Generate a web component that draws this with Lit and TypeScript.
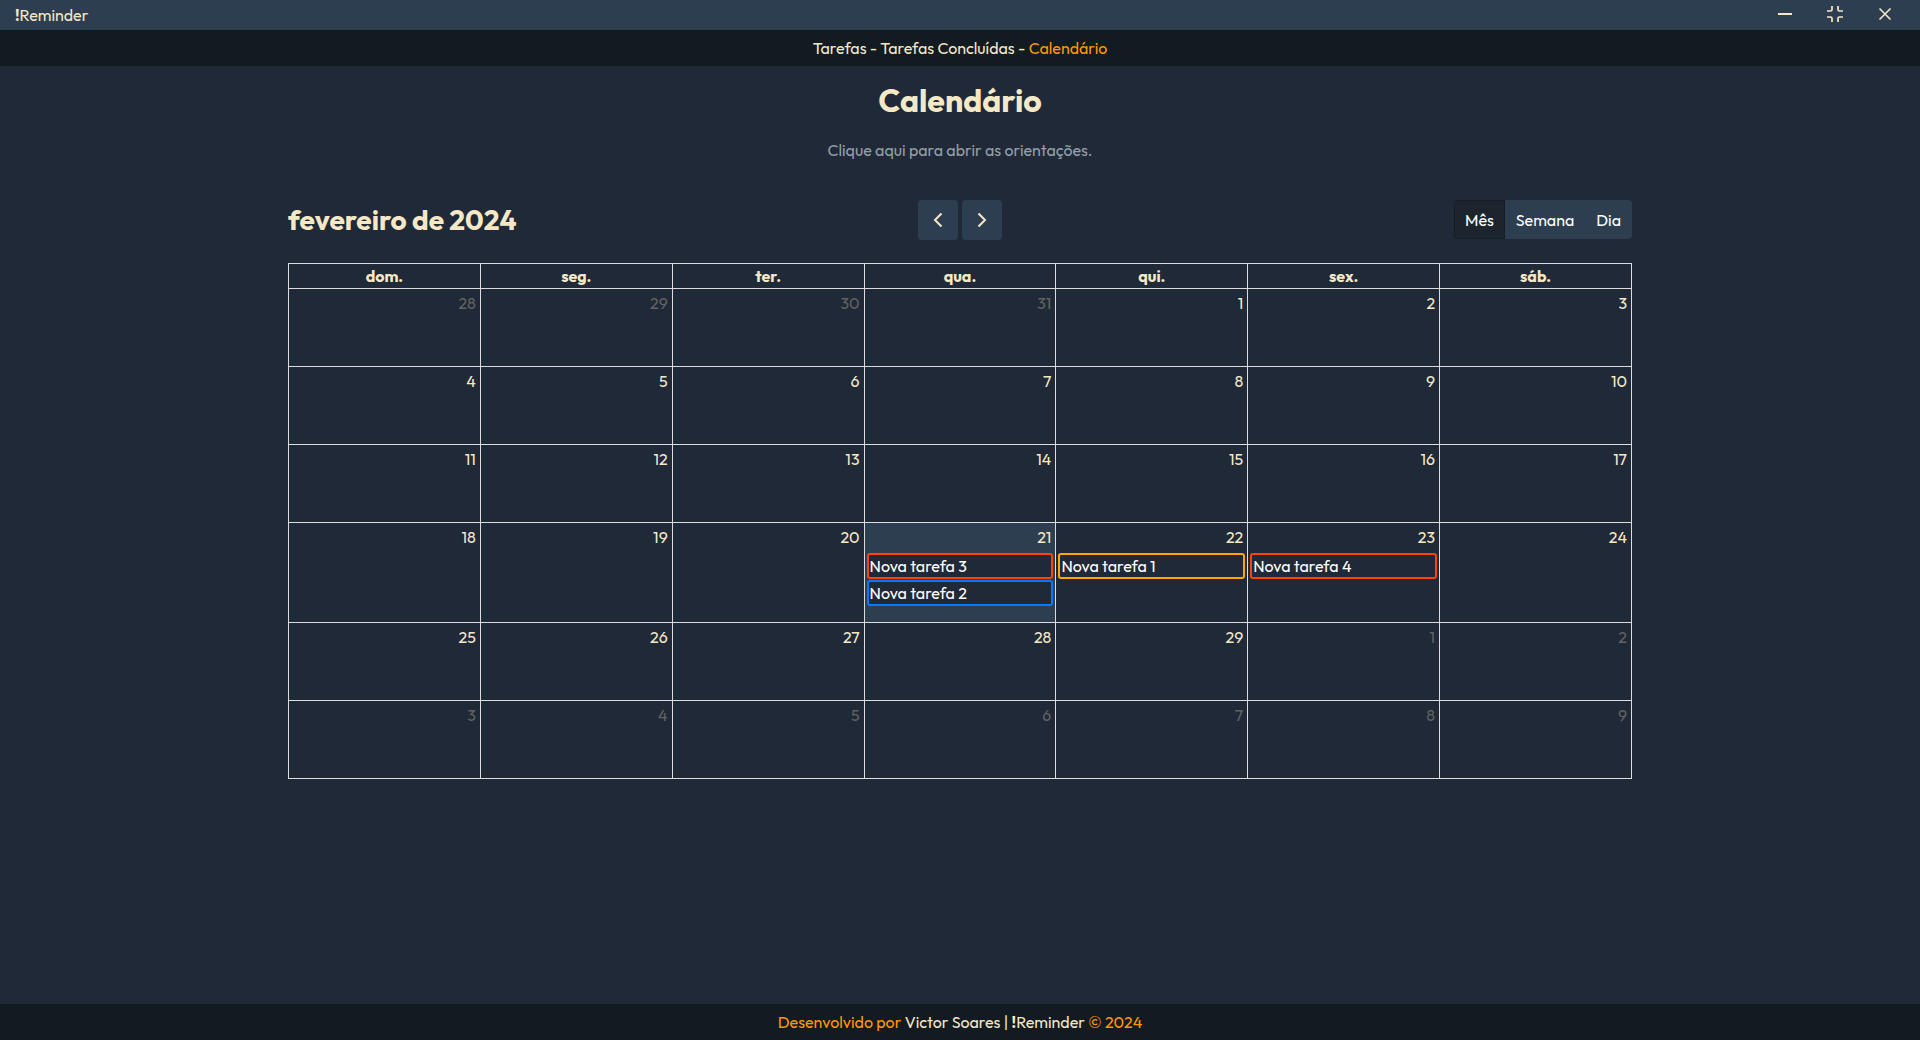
import { LitElement, html, css, svg } from "lit";
import { customElement, state } from "lit/decorators.js";
import { classMap } from "lit/directives/class-map.js";

type Level = "high" | "medium" | "low";

interface Task {
  title: string;
  level: Level;
}

interface Day {
  date: Date;
  other: boolean;
  today: boolean;
  tasks: Task[];
}

const WEEKDAYS = ["dom.", "seg.", "ter.", "qua.", "qui.", "sex.", "sáb."];
const VIEWS = ["Mês", "Semana", "Dia"];
const MONTHS = [
  "janeiro", "fevereiro", "março", "abril", "maio", "junho",
  "julho", "agosto", "setembro", "outubro", "novembro", "dezembro",
];
const TODAY = "2024-2-21";

const TASKS: Record<string, Task[]> = {
  "2024-2-21": [
    { title: "Nova tarefa 3", level: "high" },
    { title: "Nova tarefa 2", level: "low" },
  ],
  "2024-2-22": [{ title: "Nova tarefa 1", level: "medium" }],
  "2024-2-23": [{ title: "Nova tarefa 4", level: "high" }],
};

const keyOf = (d: Date) => `${d.getFullYear()}-${d.getMonth() + 1}-${d.getDate()}`;

function monthWeeks(year: number, month: number): Day[][] {
  const offset = new Date(year, month, 1).getDay();
  return Array.from({ length: 6 }, (_, w) =>
    Array.from({ length: 7 }, (_, d) => {
      const date = new Date(year, month, 1 - offset + w * 7 + d);
      const key = keyOf(date);
      return {
        date,
        other: date.getMonth() !== month,
        today: key === TODAY,
        tasks: TASKS[key] ?? [],
      };
    })
  );
}

@customElement("title-bar")
export class TitleBar extends LitElement {
  static styles = css`
    :host {
      display: block;
    }
    .bar {
      display: flex;
      justify-content: space-between;
      align-items: center;
      height: 30px;
      padding-left: 15px;
      background: #2d3e50;
    }
    .controls {
      display: flex;
    }
    .control {
      display: flex;
      align-items: center;
      justify-content: center;
      width: 50px;
      height: 30px;
      padding: 0 0 2px;
      border: 0;
      background: none;
      color: #f5e8c7;
      cursor: pointer;
    }
    .control:last-child {
      margin-right: 10px;
    }
  `;

  render() {
    return html`
      <header class="bar">
        <span><b>!</b>Reminder</span>
        <div class="controls">
          <button class="control" aria-label="Minimizar">
            <svg width="16" height="16" viewBox="0 0 16 16" fill="none" stroke="currentColor" stroke-width="2">
              <path d="M1 8h14" />
            </svg>
          </button>
          <button class="control" aria-label="Restaurar">
            <svg width="18" height="18" viewBox="0 0 18 18" fill="none" stroke="currentColor" stroke-width="1.7">
              <path d="M6 1v3.500a1.500 1.500 0 0 1-1.500 1.500H1M12 1v3.500a1.500 1.500 0 0 0 1.500 1.500H17M1 12h3.500a1.500 1.500 0 0 1 1.500 1.500V17M17 12h-3.500a1.500 1.500 0 0 0-1.500 1.500V17" />
            </svg>
          </button>
          <button class="control" aria-label="Fechar">
            <svg width="14" height="14" viewBox="0 0 14 14" fill="none" stroke="currentColor" stroke-width="1.6">
              <path d="M1.500 1.500l11 11M12.500 1.500l-11 11" />
            </svg>
          </button>
        </div>
      </header>
    `;
  }
}

@customElement("month-calendar")
export class MonthCalendar extends LitElement {
  @state() private year = 2024;
  @state() private month = 1;
  @state() private view = "Mês";

  static styles = css`
    :host {
      display: block;
    }
    .toolbar {
      display: grid;
      grid-template-columns: 1fr auto 1fr;
      align-items: start;
      margin-bottom: 23px;
    }
    .month {
      margin: 0;
      font-size: 28px;
      line-height: 40px;
      font-weight: 700;
    }
    .arrows {
      display: flex;
      gap: 4px;
    }
    .arrow {
      display: flex;
      align-items: center;
      justify-content: center;
      width: 40px;
      height: 40px;
      padding: 0;
      border: 0;
      border-radius: 4px;
      background: #2d3e50;
      color: #f5e8c7;
      cursor: pointer;
    }
    .views {
      display: flex;
      justify-self: end;
      border-radius: 4px;
      overflow: hidden;
    }
    .view {
      height: 39px;
      padding: 0 11px;
      border: 0;
      background: #2d3e50;
      color: #fff;
      font: inherit;
      cursor: pointer;
    }
    .view.active {
      background: #1c252e;
      box-shadow: inset 0 0 0 1px #151e27;
    }
    .grid {
      width: 100%;
      table-layout: fixed;
      border-collapse: collapse;
    }
    .grid th,
    .grid td {
      border: 1px solid #ddd;
    }
    .grid th {
      height: 24px;
      padding: 0;
      line-height: 24px;
      font-weight: 700;
    }
    .grid td {
      height: 77px;
      padding: 0;
      vertical-align: top;
    }
    .today {
      background: #2d3e50;
    }
    .number {
      display: block;
      padding: 4px 4px 6px;
      line-height: 20px;
      text-align: right;
      color: inherit;
      text-decoration: none;
    }
    .other .number {
      color: #616261;
    }
    .tasks {
      display: grid;
      gap: 1px;
      margin: 0 2px;
      padding: 0 0 16px;
      list-style: none;
    }
    .task {
      display: block;
      padding: 0 1px;
      border: 2px solid;
      border-radius: 3px;
      background: #202937;
      line-height: 22px;
      text-decoration: none;
    }
    .task span {
      color: #fff;
    }
    .high {
      border-color: #ff4500;
    }
    .medium {
      border-color: #ffa500;
    }
    .low {
      border-color: #007bff;
    }
  `;

  private move(step: number) {
    const next = new Date(this.year, this.month + step, 1);
    this.year = next.getFullYear();
    this.month = next.getMonth();
  }

  private arrow(label: string, step: number) {
    return html`
      <button class="arrow" aria-label=${label} @click=${() => this.move(step)}>
        <svg width="10" height="16" viewBox="0 0 10 16" fill="none" stroke="currentColor" stroke-width="2">
          ${step < 0 ? svg`<path d="M8.500 1.500L2 8l6.500 6.500" />` : svg`<path d="M1.500 1.500L8 8l-6.500 6.500" />`}
        </svg>
      </button>
    `;
  }

  private cell(day: Day) {
    return html`
      <td class=${classMap({ other: day.other, today: day.today })}>
        <a class="number" href="#${keyOf(day.date)}">${day.date.getDate()}</a>
        ${day.tasks.length
          ? html`<ul class="tasks">
              ${day.tasks.map(
                (t) => html`<li><a class="task ${t.level}" href="#tarefa"><span>${t.title}</span></a></li>`
              )}
            </ul>`
          : null}
      </td>
    `;
  }

  render() {
    return html`
      <div class="toolbar">
        <h2 class="month">${MONTHS[this.month]} de ${this.year}</h2>
        <div class="arrows">${this.arrow("Anterior", -1)}${this.arrow("Próximo", 1)}</div>
        <div class="views">
          ${VIEWS.map(
            (v) => html`<button
              class=${classMap({ view: true, active: v === this.view })}
              aria-pressed=${v === this.view}
              @click=${() => (this.view = v)}
            >${v}</button>`
          )}
        </div>
      </div>
      <table class="grid">
        <thead>
          <tr>${WEEKDAYS.map((d) => html`<th scope="col">${d}</th>`)}</tr>
        </thead>
        <tbody>
          ${monthWeeks(this.year, this.month).map(
            (week) => html`<tr>${week.map((day) => this.cell(day))}</tr>`
          )}
        </tbody>
      </table>
    `;
  }
}

@customElement("app-root")
export class AppRoot extends LitElement {
  static styles = css`
    :host {
      display: flex;
      flex-direction: column;
      min-height: 100vh;
      background: #202937;
      color: #f5e8c7;
      font: 16px/20px Outfit, Lato, sans-serif;
    }
    .nav,
    .footer {
      padding: 8px 0;
      background: #121a22;
      text-align: center;
    }
    .nav a,
    .footer a {
      color: inherit;
      text-decoration: none;
    }
    .nav a.current,
    .footer {
      color: #ff9800;
    }
    .footer a,
    .brand {
      color: #f5e8c7;
    }
    .main {
      flex: 1;
      display: flex;
      flex-direction: column;
      align-items: center;
    }
    .title {
      margin: 14px 0 20px;
      font-size: 32px;
      line-height: 40px;
      font-weight: 700;
    }
    .help {
      margin-bottom: 40px;
      padding: 0;
      border: 0;
      background: none;
      color: #949fa8;
      font: inherit;
      cursor: pointer;
    }
    .calendar {
      width: 70%;
    }
  `;

  render() {
    return html`
      <title-bar></title-bar>
      <nav class="nav">
        <a href="#tarefas">Tarefas</a> - <a href="#concluidas">Tarefas Concluídas</a> -
        <a class="current" href="#calendario">Calendário</a>
      </nav>
      <main class="main">
        <h1 class="title">Calendário</h1>
        <button class="help">Clique aqui para abrir as orientações.</button>
        <month-calendar class="calendar"></month-calendar>
      </main>
      <footer class="footer">
        Desenvolvido por <a href="#autor">Victor Soares</a>
        <span class="brand">| <b>!</b>Reminder</span> © 2024
      </footer>
    `;
  }
}
